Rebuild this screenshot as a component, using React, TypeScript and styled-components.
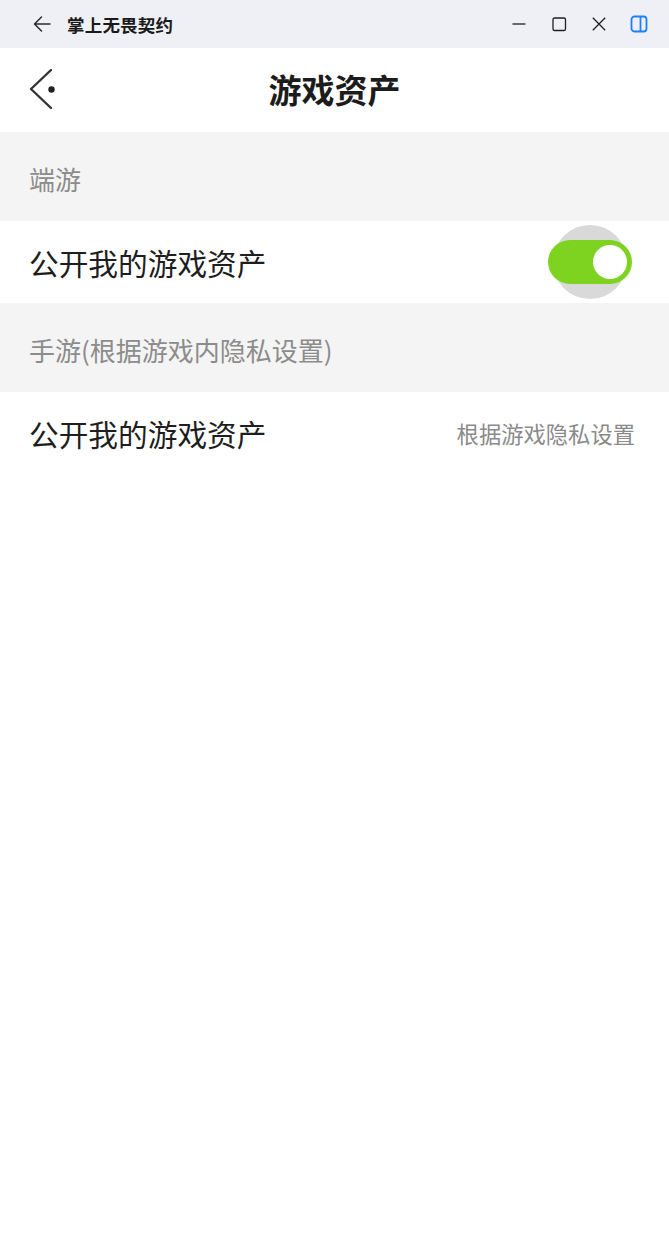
import React, { useState } from "react";
import styled, { createGlobalStyle } from "styled-components";

const GlobalStyle = createGlobalStyle`
  html, body {
    margin: 0;
    padding: 0;
    background: #ffffff;
  }
  body {
    font-family: "Noto Sans CJK SC", "Noto Sans", sans-serif;
    -webkit-font-smoothing: antialiased;
  }
`;

const Page = styled.div`
  width: 669px;
  min-height: 1234px;
  background: #ffffff;
  display: flex;
  flex-direction: column;
`;

/* ---- window title bar ---- */
const TitleBar = styled.div`
  height: 48px;
  background: #eff0f5;
  display: flex;
  align-items: center;
  padding: 0 0 0 31px;
`;

const TitleBack = styled.div`
  width: 22px;
  height: 22px;
  display: flex;
  align-items: center;
  justify-content: center;
  margin-right: 14px;
`;

const TitleText = styled.div`
  font-size: 17.5px;
  font-weight: 700;
  color: #1a1a1a;
  letter-spacing: 0.2px;
`;

const WindowControls = styled.div`
  margin-left: auto;
  display: flex;
  align-items: center;
  padding-right: 10px;
`;

const ControlButton = styled.div`
  width: 40px;
  height: 48px;
  display: flex;
  align-items: center;
  justify-content: center;
`;

/* ---- app nav bar ---- */
const NavBar = styled.div`
  height: 84px;
  position: relative;
  display: flex;
  align-items: center;
  justify-content: center;
  background: #ffffff;
`;

const NavBack = styled.div`
  position: absolute;
  left: 26px;
  top: 20px;
  width: 32px;
  height: 44px;
`;

const NavTitle = styled.div`
  font-size: 33px;
  font-weight: 700;
  color: #1c1c1c;
  margin-top: -2px;
`;

/* ---- list ---- */
const SectionHeader = styled.div`
  height: 89px;
  box-sizing: border-box;
  background: #f4f4f4;
  display: flex;
  align-items: center;
  padding: 3px 0 0 29px;
  font-size: 26px;
  color: #8c8c8c;
`;

const Row = styled.div`
  height: 82px;
  background: #ffffff;
  display: flex;
  align-items: center;
  padding: 0 34px 0 29px;
`;

const RowLabel = styled.div`
  font-size: 29.7px;
  color: #1e1e1e;
`;

const RowValue = styled.div`
  margin-left: auto;
  font-size: 22.3px;
  color: #8a8a8a;
`;

const SwitchWrap = styled.button`
  margin-left: auto;
  margin-right: 3px;
  position: relative;
  width: 84px;
  height: 44px;
  padding: 0;
  border: none;
  background: none;
  cursor: pointer;
`;

const SwitchHalo = styled.span`
  position: absolute;
  left: 5px;
  top: -15px;
  width: 74px;
  height: 74px;
  border-radius: 50%;
  background: #d9d9d9;
`;

const SwitchTrack = styled.span<{ $on: boolean }>`
  position: absolute;
  inset: 0;
  border-radius: 22px;
  background: ${(p) => (p.$on ? "#7ed321" : "#cccccc")};
`;

const SwitchKnob = styled.span<{ $on: boolean }>`
  position: absolute;
  top: 5px;
  left: ${(p) => (p.$on ? "45px" : "5px")};
  width: 34px;
  height: 34px;
  border-radius: 50%;
  background: #ffffff;
`;

const Toggle: React.FC = () => {
  const [on, setOn] = useState(true);
  return (
    <SwitchWrap aria-pressed={on} onClick={() => setOn(!on)}>
      <SwitchHalo />
      <SwitchTrack $on={on} />
      <SwitchKnob $on={on} />
    </SwitchWrap>
  );
};

export default function App() {
  return (
    <>
      <GlobalStyle />
      <Page>
        <TitleBar>
          <TitleBack>
            <svg width="20" height="18" viewBox="0 0 20 18" fill="none">
              <path d="M18 9H3M9.5 2L2.5 9l7 7" stroke="#2b2b2b" strokeWidth="1.5" strokeLinecap="round" strokeLinejoin="round" />
            </svg>
          </TitleBack>
          <TitleText>掌上无畏契约</TitleText>
          <WindowControls>
            <ControlButton>
              <svg width="16" height="16" viewBox="0 0 16 16">
                <path d="M1.5 8h13" stroke="#1f1f1f" strokeWidth="1.3" />
              </svg>
            </ControlButton>
            <ControlButton>
              <svg width="16" height="16" viewBox="0 0 16 16" fill="none">
                <rect x="2" y="2" width="12.5" height="12.5" rx="1.6" stroke="#1f1f1f" strokeWidth="1.3" />
              </svg>
            </ControlButton>
            <ControlButton>
              <svg width="16" height="16" viewBox="0 0 16 16" fill="none">
                <path d="M1.8 1.8l12.4 12.4M14.2 1.8L1.8 14.2" stroke="#1f1f1f" strokeWidth="1.3" />
              </svg>
            </ControlButton>
            <ControlButton>
              <svg width="18" height="18" viewBox="0 0 18 18" fill="none">
                <rect x="1.5" y="1.5" width="15" height="15" rx="3" stroke="#1a80ff" strokeWidth="1.8" />
                <path d="M10.5 1.8v14.4" stroke="#1a80ff" strokeWidth="1.8" />
              </svg>
            </ControlButton>
          </WindowControls>
        </TitleBar>

        <NavBar>
          <NavBack>
            <svg width="32" height="44" viewBox="0 0 32 44" fill="none">
              <path d="M25 2L5 21l20 19" stroke="#333333" strokeWidth="2.4" strokeLinecap="round" strokeLinejoin="round" />
              <circle cx="25.5" cy="21.5" r="3.2" fill="#222222" />
            </svg>
          </NavBack>
          <NavTitle>游戏资产</NavTitle>
        </NavBar>

        <SectionHeader>端游</SectionHeader>
        <Row>
          <RowLabel>公开我的游戏资产</RowLabel>
          <Toggle />
        </Row>

        <SectionHeader>手游(根据游戏内隐私设置)</SectionHeader>
        <Row>
          <RowLabel>公开我的游戏资产</RowLabel>
          <RowValue>根据游戏隐私设置</RowValue>
        </Row>
      </Page>
    </>
  );
}
